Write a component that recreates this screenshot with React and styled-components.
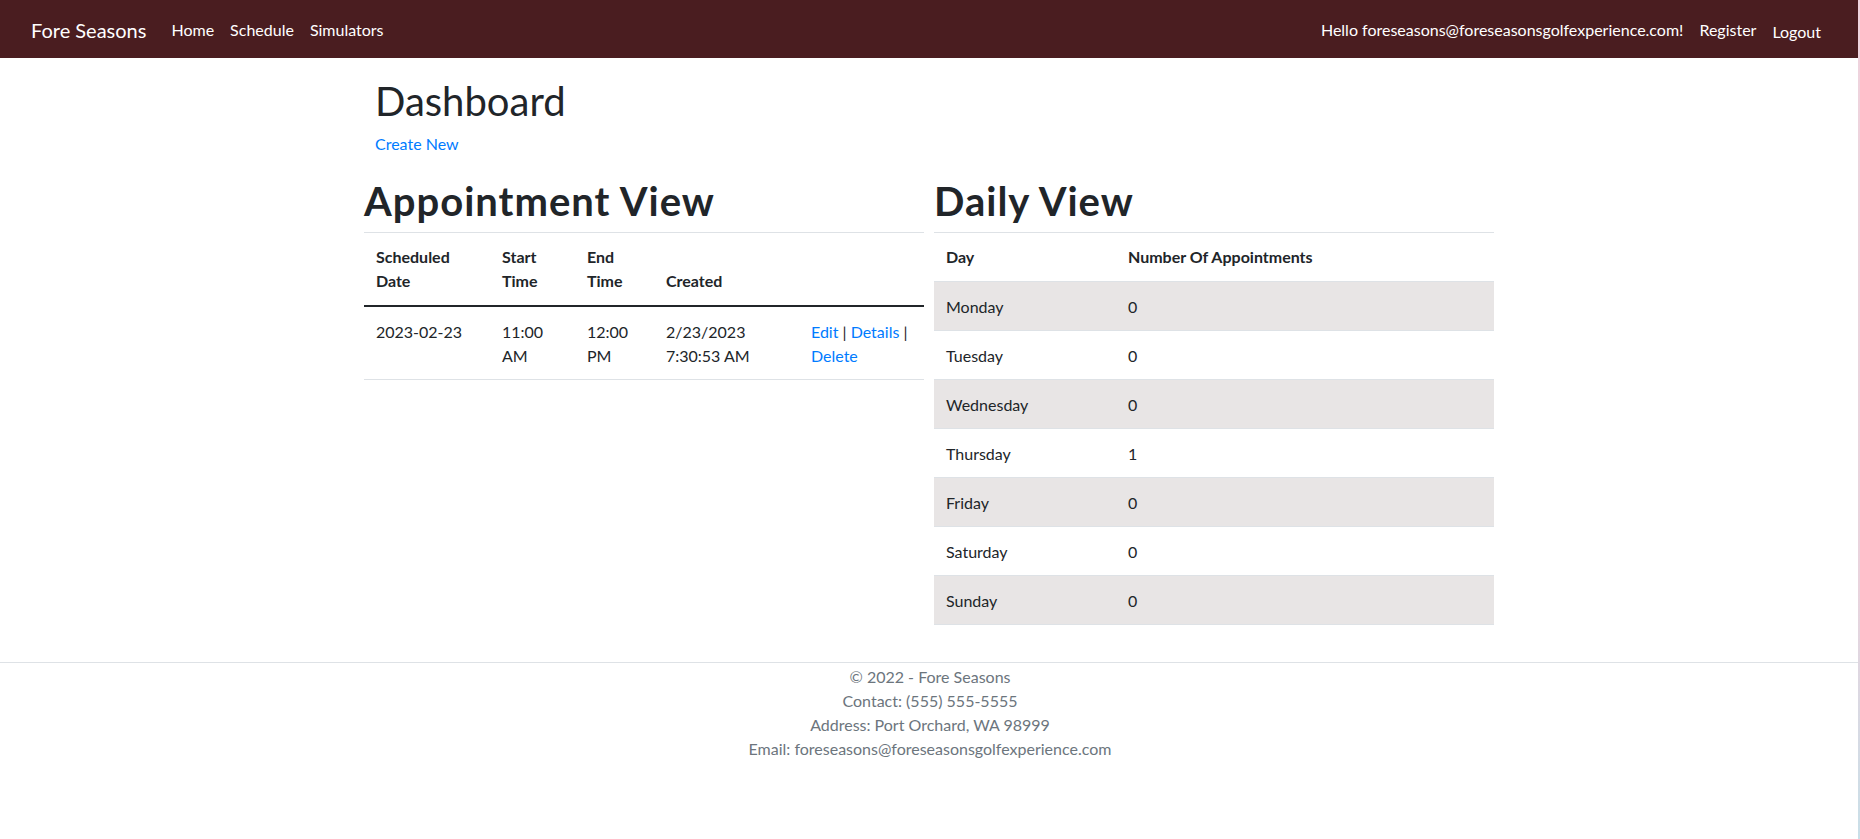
import React from 'react';
import styled, { createGlobalStyle } from 'styled-components';

const GlobalStyle = createGlobalStyle`
  body {
    margin: 0;
    font-family: Lato, "Liberation Sans", sans-serif;
    font-size: 16px;
    line-height: 24px;
    color: #212529;
    background: #ffffff;
  }
  * {
    box-sizing: border-box;
  }
`;

const appointments = [
  {
    date: '2023-02-23',
    start: '11:00 AM',
    end: '12:00 PM',
    created: '2/23/2023 7:30:53 AM',
  },
];

const days = [
  { day: 'Monday', count: 0 },
  { day: 'Tuesday', count: 0 },
  { day: 'Wednesday', count: 0 },
  { day: 'Thursday', count: 1 },
  { day: 'Friday', count: 0 },
  { day: 'Saturday', count: 0 },
  { day: 'Sunday', count: 0 },
];

const App = () => {
  return (
    <>
      <GlobalStyle />
      <Navbar>
        <Brand href="#">Fore Seasons</Brand>
        <NavList>
          <NavLink href="#">Home</NavLink>
          <NavLink href="#">Schedule</NavLink>
          <NavLink href="#">Simulators</NavLink>
        </NavList>
        <NavRight>
          <NavLink href="#">Hello foreseasons@foreseasonsgolfexperience.com!</NavLink>
          <NavLink href="#">Register</NavLink>
          <NavButton type="button">Logout</NavButton>
        </NavRight>
      </Navbar>

      <Main>
        <PageTitle>Dashboard</PageTitle>
        <Paragraph>
          <Link href="#">Create New</Link>
        </Paragraph>

        <Columns>
          <section>
            <SectionTitle>Appointment View</SectionTitle>
            <Table>
              <colgroup>
                <col style={{ width: 126 }} />
                <col style={{ width: 85 }} />
                <col style={{ width: 79 }} />
                <col style={{ width: 145 }} />
                <col style={{ width: 125 }} />
              </colgroup>
              <thead>
                <tr>
                  <HeadCell>Scheduled Date</HeadCell>
                  <HeadCell>Start Time</HeadCell>
                  <HeadCell>End Time</HeadCell>
                  <HeadCell>Created</HeadCell>
                  <HeadCell />
                </tr>
              </thead>
              <tbody>
                {appointments.map((a) => (
                  <tr key={a.created}>
                    <Cell>{a.date}</Cell>
                    <Cell>{a.start}</Cell>
                    <Cell>{a.end}</Cell>
                    <Cell>{a.created}</Cell>
                    <Cell>
                      <Link href="#">Edit</Link> | <Link href="#">Details</Link> |{' '}
                      <Link href="#">Delete</Link>
                    </Cell>
                  </tr>
                ))}
              </tbody>
            </Table>
          </section>

          <section>
            <SectionTitle>Daily View</SectionTitle>
            <Table>
              <colgroup>
                <col style={{ width: 182 }} />
                <col style={{ width: 378 }} />
              </colgroup>
              <tbody>
                <tr>
                  <Cell as="th" $head>Day</Cell>
                  <Cell as="th" $head>Number Of Appointments</Cell>
                </tr>
                {days.map((d, i) => (
                  <StripeRow key={d.day} $striped={i % 2 === 0}>
                    <Cell>{d.day}</Cell>
                    <Cell>{d.count}</Cell>
                  </StripeRow>
                ))}
              </tbody>
            </Table>
          </section>
        </Columns>
      </Main>

      <Footer>
        <div>© 2022 - Fore Seasons</div>
        <div>Contact: (555) 555-5555</div>
        <div>Address: Port Orchard, WA 98999</div>
        <div>Email: foreseasons@foreseasonsgolfexperience.com</div>
      </Footer>

      <EdgeStrip />
    </>
  );
};

const Navbar = styled.nav`
  display: flex;
  align-items: center;
  height: 58px;
  padding: 2px 31px 0;
  background: #4a1d20;
  color: #ffffff;
`;

const Brand = styled.a`
  font-size: 20px;
  line-height: 30px;
  color: #ffffff;
  text-decoration: none;
  margin-right: 17px;
`;

const NavList = styled.div`
  display: flex;
  align-items: center;
  flex: 1;
`;

const NavRight = styled.div`
  display: flex;
  align-items: center;
`;

const NavLink = styled.a`
  padding: 0 8px;
  font-size: 16px;
  line-height: 24px;
  color: #ffffff;
  text-decoration: none;
  white-space: nowrap;
`;

const NavButton = styled.button`
  padding: 3px 8px 0;
  border: 0;
  background: none;
  font: inherit;
  font-size: 16px;
  line-height: 24px;
  color: #ffffff;
  cursor: pointer;
`;

const Main = styled.main`
  max-width: 1140px;
  margin: 0 auto;
  padding: 19px 15px 0;
`;

const PageTitle = styled.h1`
  margin: 0 0 7px;
  font-size: 40px;
  line-height: 48px;
  font-weight: 400;
`;

const Paragraph = styled.p`
  margin: 0;
`;

const Link = styled.a`
  color: #007bff;
  text-decoration: none;
`;

const Columns = styled.div`
  display: grid;
  grid-template-columns: 560px 560px;
  gap: 10px;
  margin: 21px 0 0 -11px;
  align-items: start;
`;

const SectionTitle = styled.h1`
  margin: 0 0 7px;
  font-size: 40px;
  line-height: 48px;
  font-weight: 700;
  letter-spacing: 1px;
`;

const Table = styled.table`
  width: 100%;
  table-layout: fixed;
  border-collapse: collapse;
  margin-bottom: 16px;
`;

const HeadCell = styled.th`
  padding: 12px;
  text-align: left;
  vertical-align: bottom;
  font-weight: 700;
  border-top: 1px solid #dee2e6;
  border-bottom: 2px solid #212529;
`;

const Cell = styled.td`
  padding: ${(p) => (p.$head ? '12px' : '13px 12px 11px')};
  text-align: left;
  vertical-align: top;
  font-weight: ${(p) => (p.$head ? 700 : 400)};
  border-top: 1px solid #dee2e6;
  border-bottom: 1px solid #dee2e6;
`;

const StripeRow = styled.tr`
  background: ${(p) => (p.$striped ? '#e8e5e5' : 'transparent')};
`;

const Footer = styled.footer`
  margin-top: 21px;
  border-top: 1px solid #dee2e6;
  padding: 2px 0 16px;
  text-align: center;
  color: #6c757d;
  line-height: 24px;
`;

const EdgeStrip = styled.div`
  position: fixed;
  top: 0;
  right: 0;
  width: 2px;
  height: 100vh;
  background: linear-gradient(#efd3dd, #e9d3dd 70%, #c9dfe8);
`;

export default App;
